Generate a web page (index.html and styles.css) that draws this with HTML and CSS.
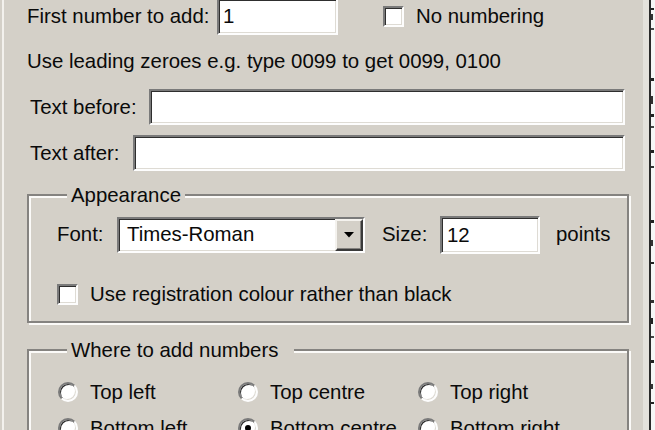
FILE: index.html
```html
<!DOCTYPE html>
<html>
<head>
<meta charset="utf-8">
<link rel="stylesheet" href="styles.css">
</head>
<body>
<div class="screen">
  <div class="dialog">
    <div class="row row-first">
      <span class="label w-first">First number to add:</span>
      <div class="field field-first"><span class="val">1</span></div>
      <span class="check"></span>
      <span class="label check-label">No numbering</span>
    </div>
    <p class="hint">Use leading zeroes e.g. type 0099 to get 0099, 0100</p>
    <div class="row row-text row-before">
      <span class="label w-before">Text before:</span>
      <div class="field field-before"></div>
    </div>
    <div class="row row-text row-after">
      <span class="label w-after">Text after:</span>
      <div class="field field-after"></div>
    </div>
    <fieldset class="group group-appearance">
      <legend class="legend">Appearance</legend>
      <div class="row row-font">
        <span class="label w-font">Font:</span>
        <div class="field combo">
          <span class="val combo-val">Times-Roman</span>
          <span class="combo-btn"><svg width="10" height="6" viewBox="0 0 10 6"><polygon points="0,0 10,0 5,5.5" fill="#000"/></svg></span>
        </div>
        <span class="label w-size">Size:</span>
        <div class="field field-size"><span class="val">12</span></div>
        <span class="label points">points</span>
      </div>
      <div class="row row-reg">
        <span class="check"></span>
        <span class="label check-label">Use registration colour rather than black</span>
      </div>
    </fieldset>
    <fieldset class="group group-where">
      <legend class="legend legend-where">Where to add numbers</legend>
      <div class="radios">
        <div class="opt"><span class="radio"></span><span class="label">Top left</span></div>
        <div class="opt"><span class="radio"></span><span class="label">Top centre</span></div>
        <div class="opt"><span class="radio"></span><span class="label">Top right</span></div>
        <div class="opt"><span class="radio"></span><span class="label">Bottom left</span></div>
        <div class="opt"><span class="radio radio-on"></span><span class="label">Bottom centre</span></div>
        <div class="opt"><span class="radio"></span><span class="label">Bottom right</span></div>
      </div>
    </fieldset>
  </div>
  <div class="edge"></div>
  <div class="behind">
    <svg width="4" height="430" viewBox="0 0 4 430">
      <rect x="0" y="8" width="3" height="2" fill="#222"/>
      <rect x="0" y="14" width="2" height="6" fill="#333"/>
      <rect x="0" y="28" width="3" height="2" fill="#444"/>
      <rect x="0" y="78" width="3" height="3" fill="#222"/>
      <rect x="0" y="96" width="2" height="8" fill="#333"/>
      <rect x="0" y="114" width="3" height="3" fill="#222"/>
      <rect x="0" y="126" width="3" height="2" fill="#444"/>
      <rect x="0" y="150" width="3" height="3" fill="#222"/>
      <rect x="0" y="166" width="3" height="2" fill="#333"/>
      <rect x="0" y="220" width="3" height="3" fill="#222"/>
      <rect x="0" y="240" width="2" height="6" fill="#333"/>
      <rect x="0" y="262" width="3" height="2" fill="#222"/>
      <rect x="0" y="300" width="3" height="3" fill="#333"/>
      <rect x="0" y="318" width="2" height="6" fill="#222"/>
      <rect x="0" y="336" width="3" height="2" fill="#444"/>
      <rect x="0" y="360" width="3" height="3" fill="#222"/>
      <rect x="0" y="384" width="2" height="5" fill="#333"/>
      <rect x="0" y="402" width="3" height="2" fill="#222"/>
    </svg>
  </div>
</div>
</body>
</html>
```
FILE: styles.css
```css
html, body {
  margin: 0;
  padding: 0;
}
body {
  width: 655px;
  height: 430px;
  overflow: hidden;
  background: #d4d0c8;
  font-family: "Liberation Sans", Arial, sans-serif;
  font-size: 20.4px;
  color: #0a0a0a;
}
.screen {
  display: flex;
  height: 430px;
}
.dialog {
  flex: 1;
  margin-left: 2px;
  border-left: 2px solid #f3f1ed;
  padding-left: 23px;
  min-width: 0;
}
.edge {
  width: 6px;
  background: #e4e2dc;
}
.behind {
  width: 4px;
  border-left: 2px solid #2a2a2a;
  background: #f6f6f6;
}
.behind svg {
  display: block;
}
.row {
  display: flex;
  align-items: center;
}
.label {
  white-space: nowrap;
  flex: none;
}
.field {
  box-sizing: border-box;
  background: #fff;
  border: 2px solid;
  border-color: #7a7a7a #fdfdfd #fdfdfd #7a7a7a;
  box-shadow: inset 1px 1px 0 #2e2e2e, inset -1px -1px 0 #dedbd4;
  display: flex;
  align-items: center;
  flex: none;
}
.val {
  white-space: nowrap;
}
.row-first {
  margin-top: -2px;
  height: 37px;
}
.w-first {
  width: 190px;
}
.field-first {
  width: 121px;
  height: 37px;
  padding-left: 4px;
}
.check {
  flex: none;
  box-sizing: border-box;
  width: 21px;
  height: 21px;
  background: #fff;
  border: 2px solid;
  border-color: #7a7a7a #fdfdfd #fdfdfd #7a7a7a;
  box-shadow: inset 1px 1px 0 #2e2e2e, inset -1px -1px 0 #dedbd4;
}
.row-first .check {
  margin-left: 45px;
}
.check-label {
  margin-left: 12px;
}
.hint {
  margin: 14px 0 0;
  line-height: 24px;
  height: 24px;
  white-space: nowrap;
}
.row-text {
  height: 36px;
  padding-left: 3px;
}
.row-before {
  margin-top: 16px;
}
.row-after {
  margin-top: 10px;
}
.w-before {
  width: 119px;
}
.w-after {
  width: 103px;
}
.field-before {
  width: 476px;
  height: 36px;
}
.field-after {
  width: 492px;
  height: 36px;
}
.group {
  box-sizing: border-box;
  width: 602px;
  min-width: 0;
  margin: 0;
  padding: 0 0 0 28px;
  border: 2px solid #858380;
  box-shadow: inset 2px 2px 0 #fbfaf8, 2px 2px 0 #fbfaf8;
}
.legend {
  margin-left: 10px;
  padding: 0 4px;
  line-height: 24px;
  background: #d4d0c8;
  white-space: nowrap;
}
.legend-where {
  padding-right: 16px;
}
.group-appearance {
  margin-top: 12px;
  padding-bottom: 15px;
}
.row-font {
  margin-top: 9px;
  height: 37px;
}
.w-font {
  width: 60px;
}
.combo {
  width: 248px;
  height: 36px;
  padding-left: 8px;
  justify-content: space-between;
}
.combo-btn {
  box-sizing: border-box;
  width: 28px;
  height: 32px;
  background: #d4d0c8;
  border: 2px solid;
  border-color: #f4f2ee #3a3a3a #3a3a3a #f4f2ee;
  box-shadow: inset -1px -1px 0 #858380;
  display: flex;
  align-items: center;
  justify-content: center;
}
.combo-btn svg {
  display: block;
}
.w-size {
  margin-left: 17px;
  width: 58px;
}
.field-size {
  width: 100px;
  height: 38px;
  padding-left: 5px;
  align-self: flex-end;
  margin-bottom: -1px;
}
.points {
  margin-left: 16px;
}
.row-reg {
  margin-top: 29px;
  height: 24px;
}
.group-where {
  margin-top: 15px;
  padding-bottom: 20px;
}
.radios {
  margin-top: 18px;
  padding-left: 1px;
  display: grid;
  grid-template-columns: 180px 180px 180px;
  grid-auto-rows: 24px;
  row-gap: 12px;
}
.opt {
  display: flex;
  align-items: center;
}
.radio {
  flex: none;
  box-sizing: border-box;
  width: 20px;
  height: 20px;
  margin-right: 12px;
  border-radius: 50%;
  background: #fff;
  border: 2px solid;
  border-color: #7a7a7a #fdfdfd #fdfdfd #7a7a7a;
  box-shadow: inset 1px 1px 0 #2e2e2e, inset -1px -1px 0 #dedbd4;
  display: flex;
  align-items: center;
  justify-content: center;
}
.radio-on::after {
  content: "";
  width: 6px;
  height: 6px;
  border-radius: 50%;
  background: #000;
}
```
